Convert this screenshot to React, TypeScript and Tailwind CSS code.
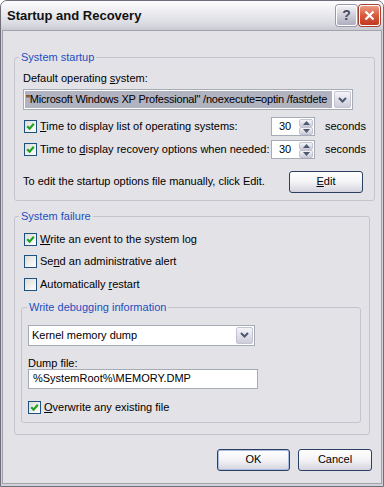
import React from "react";

const ui = "font-['Liberation_Sans',Arial,sans-serif] text-[11px] leading-[13px] text-black";

function Check({ checked }: { checked?: boolean }) {
  return (
    <span className="flex h-[13px] w-[13px] shrink-0 items-center justify-center border border-[#1c5180] bg-gradient-to-br from-[#dcdcd7] to-white">
      {checked && (
        <svg width="9" height="9" viewBox="0 0 9 9">
          <path d="M1.2 4.2 L3.6 6.6 L7.8 1.8" fill="none" stroke="#21a121" strokeWidth="2.2" />
        </svg>
      )}
    </span>
  );
}

function DropBtn() {
  return (
    <span className="flex h-full w-[17px] shrink-0 items-center justify-center rounded-[2px] border border-[#c4c3d4] bg-gradient-to-b from-[#f4f4f8] to-[#cdccd9]">
      <svg width="9" height="6" viewBox="0 0 9 6">
        <path d="M1 1 L4.5 4.5 L8 1" fill="none" stroke="#4c5870" strokeWidth="2" />
      </svg>
    </span>
  );
}

function SpinBtn({ up }: { up?: boolean }) {
  return (
    <span className="flex h-[8px] w-[14px] items-center justify-center rounded-[2px] border border-[#c4c3d4] bg-gradient-to-b from-[#f4f4f8] to-[#cdccd9]">
      <svg width="7" height="4" viewBox="0 0 7 4">
        <path d={up ? "M0 4 L3.5 0 L7 4 Z" : "M0 0 L3.5 4 L7 0 Z"} fill="#4c5870" />
      </svg>
    </span>
  );
}

function Spin({ value }: { value: string }) {
  return (
    <div className="flex h-[19px] w-[44px] shrink-0 items-center border border-[#a5acb5] bg-white pl-[7px]">
      <span className="flex-1">{value}</span>
      <div className="mr-[1px] flex flex-col">
        <SpinBtn up />
        <SpinBtn />
      </div>
    </div>
  );
}

function XpButton({ children, def, w }: { children: React.ReactNode; def?: boolean; w: string }) {
  return (
    <button
      type="button"
      className={`${w} flex h-[22px] items-center justify-center rounded-[3px] border border-[#2c3f63] bg-gradient-to-b from-white via-[#f3f3f6] to-[#d5d4df] ${
        def ? "shadow-[inset_0_0_0_1px_#a9bde2]" : ""
      }`}
    >
      {children}
    </button>
  );
}

function Group({ title, className, legendClass, children }: { title: string; className: string; legendClass: string; children: React.ReactNode }) {
  return (
    <fieldset className={`rounded-[3px] border border-[#c5c4cc] ${className}`}>
      <legend className={`px-[2px] text-[#1d4fbf] ${legendClass}`}>{title}</legend>
      {children}
    </fieldset>
  );
}

export default function App() {
  return (
    <div className={`${ui} flex h-[487px] w-[384px] flex-col rounded-t-[7px] border border-[#6f6f7c] bg-[#d2d1da]`}>
      {/* title bar */}
      <div className="flex h-[29px] shrink-0 items-center rounded-t-[6px] bg-[linear-gradient(to_bottom,#fdfdfe_0%,#eeeef2_35%,#dadae1_80%,#c9c9d2_100%)] pl-[6px] pr-[3px]">
        <span className="flex-1 font-['Liberation_Sans',Arial,sans-serif] text-[13px] font-bold text-[#111]">Startup and Recovery</span>
        <span className="flex h-[21px] w-[21px] items-center justify-center rounded-[3px] border border-white bg-gradient-to-b from-[#f2f2f6] to-[#aeadbf] text-[14px] font-bold text-[#4a4a5c] shadow-[0_0_0_1px_#9a99aa]">
          ?
        </span>
        <span className="ml-[2px] flex h-[21px] w-[21px] items-center justify-center rounded-[3px] border border-white bg-gradient-to-b from-[#eb9b85] via-[#d8593d] to-[#c0391e] shadow-[0_0_0_1px_#a4432e]">
          <svg width="11" height="11" viewBox="0 0 11 11">
            <path d="M1.5 1.5 L9.5 9.5 M9.5 1.5 L1.5 9.5" stroke="white" strokeWidth="2.2" />
          </svg>
        </span>
      </div>

      {/* client area */}
      <div className="mx-[1px] mb-[2px] flex flex-1 flex-col border border-[#a3a2ad] bg-[#e3e2e7] pl-[11px] pr-[9px] pt-[20px]">
        <Group title="System startup" className="w-[356px]" legendClass="ml-[4px]">
          <div className="px-[8px] pb-[8px] pt-[8px]">
            <div>
              Default operating <u>s</u>ystem:
            </div>
            <div className="mt-[4px] flex h-[21px] w-[330px] items-center border border-[#a5acb5] bg-white p-[1px]">
              <span className="flex h-full flex-1 items-center whitespace-nowrap bg-[#b2b3c0] pl-[1px] tracking-[-0.2px]">
                "Microsoft Windows XP Professional" /noexecute=optin /fastdete
              </span>
              <span className="ml-[2px] h-full">
                <DropBtn />
              </span>
            </div>
            <div className="mt-[7px] flex h-[19px] items-center">
              <div className="flex w-[248px] items-center pl-[1px]">
                <Check checked />
                <span className="ml-[3px]">
                  <u>T</u>ime to display list of operating systems:
                </span>
              </div>
              <Spin value="30" />
              <span className="ml-[10px]">seconds</span>
            </div>
            <div className="mt-[4px] flex h-[19px] items-center">
              <div className="flex w-[248px] items-center pl-[1px]">
                <Check checked />
                <span className="ml-[3px]">
                  Time to <u>d</u>isplay recovery options when needed:
                </span>
              </div>
              <Spin value="30" />
              <span className="ml-[10px]">seconds</span>
            </div>
            <div className="mt-[12px] flex h-[21px] items-center">
              <span className="flex-1">To edit the startup options file manually, click Edit.</span>
              <XpButton w="w-[74px]">
                <span>
                  <u>E</u>dit
                </span>
              </XpButton>
              <span className="w-[3px]" />
            </div>
          </div>
        </Group>

        <Group title="System failure" className="mt-[9px] w-[356px]" legendClass="ml-[4px]">
          <div className="pb-[11px] pt-[5px]">
            <div className="flex h-[22.5px] items-center pl-[9px]">
              <Check checked />
              <span className="ml-[3px]">
                <u>W</u>rite an event to the system log
              </span>
            </div>
            <div className="flex h-[22.5px] items-center pl-[9px]">
              <Check />
              <span className="ml-[3px]">
                Se<u>n</u>d an administrative alert
              </span>
            </div>
            <div className="flex h-[22.5px] items-center pl-[9px]">
              <Check />
              <span className="ml-[3px]">
                Automatically <u>r</u>estart
              </span>
            </div>

            <Group title="Write debugging information" className="ml-[6px] mt-[5px] w-[340px]" legendClass="ml-[5px]">
              <div className="pb-[6px] pl-[6px] pt-[11px]">
                <div className="flex h-[21px] w-[227px] items-center border border-[#a5acb5] bg-white p-[1px]">
                  <span className="flex-1 pl-[2px]">Kernel memory dump</span>
                  <span className="h-full">
                    <DropBtn />
                  </span>
                </div>
                <div className="mt-[11px] leading-[12px]">Dump file:</div>
                <div className="flex h-[20px] w-[230px] items-center border border-[#a5acb5] bg-white pl-[4px]">
                  %SystemRoot%\MEMORY.DMP
                </div>
                <div className="mt-[10px] flex h-[17px] items-center">
                  <Check checked />
                  <span className="ml-[3px]">
                    <u>O</u>verwrite any existing file
                  </span>
                </div>
              </div>
            </Group>
          </div>
        </Group>

        <div className="mt-[14px] flex justify-end gap-[8px]">
          <XpButton w="w-[73px]" def>
            OK
          </XpButton>
          <XpButton w="w-[74px]">Cancel</XpButton>
        </div>
      </div>
    </div>
  );
}
